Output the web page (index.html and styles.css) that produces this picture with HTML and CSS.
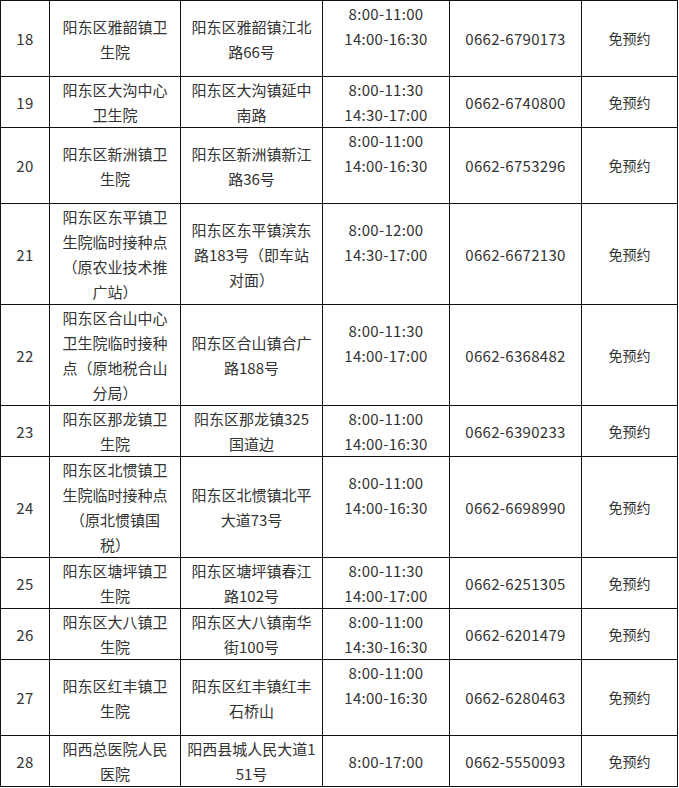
FILE: index.html
```html
<!DOCTYPE html>
<html lang="zh-CN">
<head>
<meta charset="utf-8">
<title>接种点</title>
<link rel="stylesheet" href="styles.css">
</head>
<body>
<table class="sites">
<colgroup>
<col class="c-no"><col class="c-name"><col class="c-addr"><col class="c-time"><col class="c-tel"><col class="c-note">
</colgroup>
<tbody>
<tr><td class="num">18</td><td>阳东区雅韶镇卫生院</td><td>阳东区雅韶镇江北路66号</td><td class="num"><div>8:00-11:00</div><div>14:00-16:30</div><div class="blank"></div></td><td class="num">0662-6790173</td><td class="note">免预约</td></tr>
<tr><td class="num">19</td><td>阳东区大沟中心卫生院</td><td>阳东区大沟镇延中南路</td><td class="num"><div>8:00-11:30</div><div>14:30-17:00</div></td><td class="num">0662-6740800</td><td class="note">免预约</td></tr>
<tr><td class="num">20</td><td>阳东区新洲镇卫生院</td><td>阳东区新洲镇新江路36号</td><td class="num"><div>8:00-11:00</div><div>14:00-16:30</div><div class="blank"></div></td><td class="num">0662-6753296</td><td class="note">免预约</td></tr>
<tr><td class="num">21</td><td>阳东区东平镇卫生院临时接种点（原农业技术推广站）</td><td>阳东区东平镇滨东路183号（即车站对面）</td><td class="num"><div>8:00-12:00</div><div>14:30-17:00</div><div class="blank"></div></td><td class="num">0662-6672130</td><td class="note">免预约</td></tr>
<tr><td class="num">22</td><td>阳东区合山中心卫生院临时接种点（原地税合山分局）</td><td>阳东区合山镇合广路188号</td><td class="num"><div>8:00-11:30</div><div>14:00-17:00</div><div class="blank"></div></td><td class="num">0662-6368482</td><td class="note">免预约</td></tr>
<tr><td class="num">23</td><td>阳东区那龙镇卫生院</td><td>阳东区那龙镇325国道边</td><td class="num"><div>8:00-11:00</div><div>14:00-16:30</div></td><td class="num">0662-6390233</td><td class="note">免预约</td></tr>
<tr><td class="num">24</td><td>阳东区北惯镇卫生院临时接种点（原北惯镇国税）</td><td>阳东区北惯镇北平大道73号</td><td class="num"><div>8:00-11:00</div><div>14:00-16:30</div><div class="blank"></div></td><td class="num">0662-6698990</td><td class="note">免预约</td></tr>
<tr><td class="num">25</td><td>阳东区塘坪镇卫生院</td><td>阳东区塘坪镇春江路102号</td><td class="num"><div>8:00-11:30</div><div>14:00-17:00</div></td><td class="num">0662-6251305</td><td class="note">免预约</td></tr>
<tr><td class="num">26</td><td>阳东区大八镇卫生院</td><td>阳东区大八镇南华街100号</td><td class="num"><div>8:00-11:00</div><div>14:30-16:30</div></td><td class="num">0662-6201479</td><td class="note">免预约</td></tr>
<tr><td class="num">27</td><td>阳东区红丰镇卫生院</td><td>阳东区红丰镇红丰石桥山</td><td class="num"><div>8:00-11:00</div><div>14:00-16:30</div><div class="blank"></div></td><td class="num">0662-6280463</td><td class="note">免预约</td></tr>
<tr><td class="num">28</td><td>阳西总医院人民医院</td><td>阳西县城人民大道151号</td><td class="num"><div>8:00-17:00</div></td><td class="num">0662-5550093</td><td class="note">免预约</td></tr>
</tbody>
</table>
</body>
</html>
```
FILE: styles.css
```css
html, body {
  margin: 0;
  padding: 0;
  background: #fff;
}

.sites {
  border-collapse: collapse;
  table-layout: fixed;
  width: 678px;
  font-family: "Noto Sans CJK SC", "Microsoft YaHei", sans-serif;
  font-size: 15px;
  line-height: 25px;
  color: #333;
  text-spacing-trim: space-all;
}

.c-no { width: 49px; }
.c-name { width: 131px; }
.c-addr { width: 142px; }
.c-time { width: 127px; }
.c-tel { width: 132px; }
.c-note { width: 96px; }

.sites td {
  border: 1px solid #111;
  padding: 0 6px;
  text-align: center;
  vertical-align: middle;
  word-break: break-all;
}

.sites td.num {
  letter-spacing: 0.3px;
}

.sites td.note {
  font-size: 14px;
}

.blank {
  height: 25px;
}
```
